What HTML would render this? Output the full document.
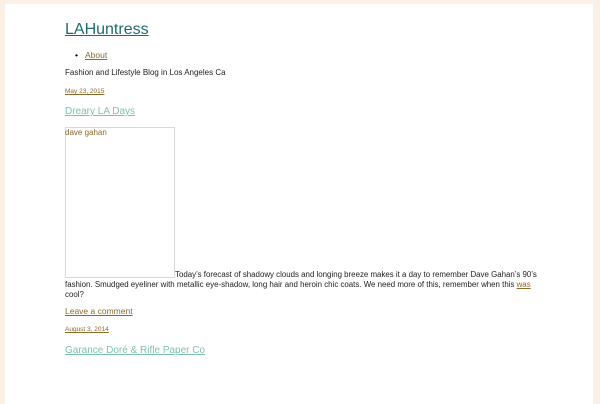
<!DOCTYPE html>
<html><head><meta charset="utf-8"><style>
body{margin:0;width:600px;height:400px;background:#fbf0e5;font-family:"Liberation Sans",sans-serif;overflow:hidden;position:relative}
.panel{position:absolute;left:5px;top:4px;width:588px;height:400px;background:#fff}
.a{position:absolute;white-space:nowrap;margin:0}
.br{color:#8a6a2a}
.tl{color:#7cc3aa}
</style></head><body>
<div class="panel"></div>
<div class="a" style="left:65px;top:21px;font-size:16px;color:#1e6b6e;text-decoration:underline">LAHuntress</div>
<div class="a" style="left:75px;top:50px;font-size:8.5px">•</div>
<div class="a br" style="left:85px;top:50px;font-size:8.5px;text-decoration:underline">About</div>
<div class="a" style="left:65px;top:68px;font-size:8px;color:#222">Fashion and Lifestyle Blog in Los Angeles Ca</div>
<div class="a br" style="left:65px;top:88px;font-size:6.5px;text-decoration:underline">May 23, 2015</div>
<div class="a tl" style="left:65px;top:106px;font-size:10px;text-decoration:underline">Dreary LA Days</div>
<div style="position:absolute;left:65px;top:127px;width:108px;height:149px;border:1px solid #d8d8d8"></div>
<div class="a br" style="left:65px;top:128px;font-size:8px">dave gahan</div>
<div class="a" style="left:65px;top:270px;font-size:7.9px;line-height:10px;color:#222;white-space:normal;width:480px"><span style="display:inline-block;width:110px"></span>Today’s forecast of shadowy clouds and longing breeze makes it a day to remember Dave Gahan’s 90’s fashion. Smudged eyeliner with metallic eye-shadow, long hair and heroin chic coats. We need more of this, remember when this <span class="br" style="text-decoration:underline">was</span> cool?</div>
<div class="a br" style="left:65px;top:306px;font-size:8.5px;text-decoration:underline">Leave a comment</div>
<div class="a br" style="left:65px;top:326px;font-size:6.5px;text-decoration:underline">August 3, 2014</div>
<div class="a tl" style="left:65px;top:345px;font-size:10px;text-decoration:underline">Garance Doré &amp; Rifle Paper Co</div>
</body></html>
